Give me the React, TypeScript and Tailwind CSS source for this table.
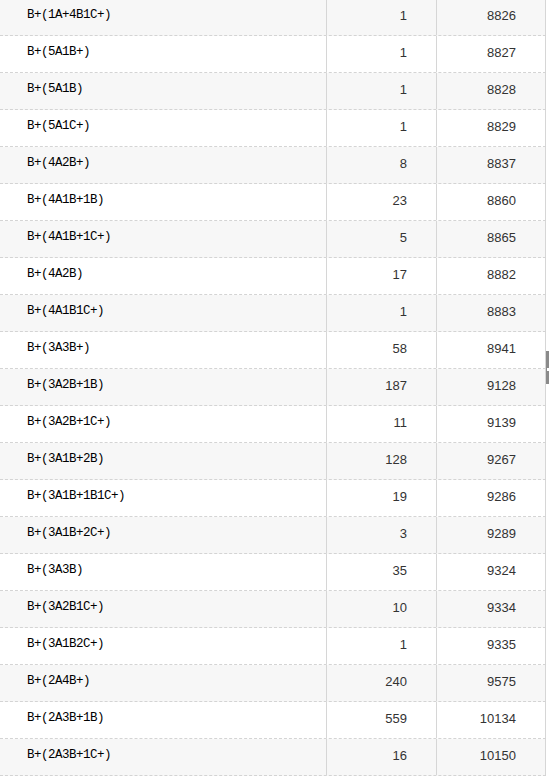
const rows: [string, number, number][] = [
  ["B+(1A+4B1C+)", 1, 8826],
  ["B+(5A1B+)", 1, 8827],
  ["B+(5A1B)", 1, 8828],
  ["B+(5A1C+)", 1, 8829],
  ["B+(4A2B+)", 8, 8837],
  ["B+(4A1B+1B)", 23, 8860],
  ["B+(4A1B+1C+)", 5, 8865],
  ["B+(4A2B)", 17, 8882],
  ["B+(4A1B1C+)", 1, 8883],
  ["B+(3A3B+)", 58, 8941],
  ["B+(3A2B+1B)", 187, 9128],
  ["B+(3A2B+1C+)", 11, 9139],
  ["B+(3A1B+2B)", 128, 9267],
  ["B+(3A1B+1B1C+)", 19, 9286],
  ["B+(3A1B+2C+)", 3, 9289],
  ["B+(3A3B)", 35, 9324],
  ["B+(3A2B1C+)", 10, 9334],
  ["B+(3A1B2C+)", 1, 9335],
  ["B+(2A4B+)", 240, 9575],
  ["B+(2A3B+1B)", 559, 10134],
  ["B+(2A3B+1C+)", 16, 10150],
];

export default function App() {
  return (
    <div className="relative w-[549px] h-[778px] overflow-hidden bg-white text-[#1a1a1a]">
      <div className="-mt-px w-[546px]">
        {rows.map(([name, count, total], i) => (
          <div
            key={name}
            className={`flex h-[37px] border-b border-dashed border-[#d4d4d4] ${i % 2 === 0 ? "bg-[#f7f7f7]" : "bg-white"}`}
          >
            <div className="w-[327px] flex items-center pl-[27px] pb-[3px] border-r border-[#d6d6d6] font-['Liberation_Mono',monospace] text-[12.5px] tracking-[-0.5px] text-black">
              {name}
            </div>
            <div className="w-[110px] flex items-center justify-end pr-[29px] pb-[3px] border-r border-[#d6d6d6] font-['Liberation_Sans',sans-serif] text-[13px] text-[#333]">
              {count}
            </div>
            <div className="w-[109px] flex items-center justify-end pr-[29px] pb-[3px] border-r border-[#d6d6d6] font-['Liberation_Sans',sans-serif] text-[13px] text-[#333]">
              {total}
            </div>
          </div>
        ))}
      </div>
      <div className="absolute left-[546px] top-[351px] w-[3px] h-[33px] bg-[#8a8a8a]">
        <div className="mt-[17px] h-[3px] w-[2px] ml-[1px] bg-white" />
      </div>
    </div>
  );
}
